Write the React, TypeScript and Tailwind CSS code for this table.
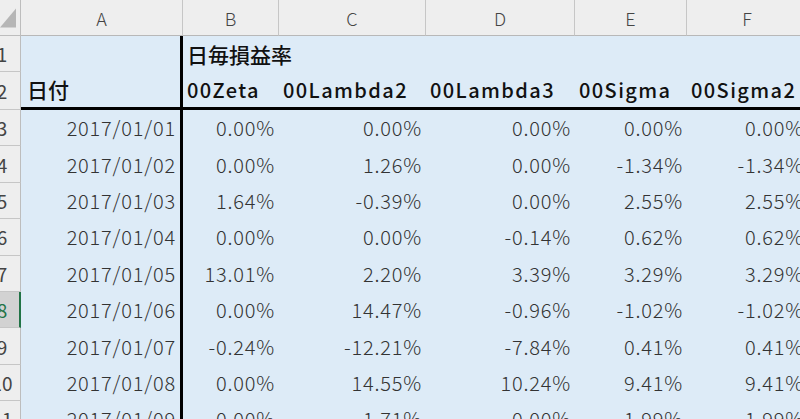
import React from "react";

const cols = ["A", "B", "C", "D", "E", "F"];

const labels = ["00Zeta", "00Lambda2", "00Lambda3", "00Sigma", "00Sigma2"];

const rows: string[][] = [
  ["2017/01/01", "0.00%", "0.00%", "0.00%", "0.00%", "0.00%"],
  ["2017/01/02", "0.00%", "1.26%", "0.00%", "-1.34%", "-1.34%"],
  ["2017/01/03", "1.64%", "-0.39%", "0.00%", "2.55%", "2.55%"],
  ["2017/01/04", "0.00%", "0.00%", "-0.14%", "0.62%", "0.62%"],
  ["2017/01/05", "13.01%", "2.20%", "3.39%", "3.29%", "3.29%"],
  ["2017/01/06", "0.00%", "14.47%", "-0.96%", "-1.02%", "-1.02%"],
  ["2017/01/07", "-0.24%", "-12.21%", "-7.84%", "0.41%", "0.41%"],
  ["2017/01/08", "0.00%", "14.55%", "10.24%", "9.41%", "9.41%"],
  ["2017/01/09", "0.00%", "1.71%", "0.00%", "1.99%", "1.99%"],
];

// selected row (row header highlighted)
const activeRow = 8;

function RowHead({ n }: { n: number }) {
  const active = n === activeRow;
  return (
    <div
      className={
        "relative overflow-hidden border-b border-[#c6c6c6] flex items-center " +
        (active
          ? "bg-[#d2d2d2] text-[#217346] border-r-2 border-r-[#217346]"
          : "bg-[#eeeeee] text-[#444] border-r border-r-[#bdbdbd]")
      }
    >
      <div className="w-[40px] ml-[-18px] shrink-0 text-center text-[19px] leading-none">{n}</div>
    </div>
  );
}

export default function App() {
  return (
    <div
      className="w-[800px] h-[419px] overflow-hidden bg-[#ddebf7]"
      style={{ fontFamily: '"Noto Sans CJK JP", "Noto Sans", sans-serif' }}
    >
      <div className="grid grid-cols-[21px_162px_96px_147px_149px_112px_121px] grid-rows-[36px_36px_38px_repeat(9,36.4px)] w-[808px]">
        {/* corner */}
        <div className="bg-[#eeeeee] border-r border-b border-[#bdbdbd] flex items-end justify-end pr-[4px] pb-[7px]">
          <svg width="17" height="20" viewBox="0 0 17 20">
            <polygon points="17,0 17,20 0,20" fill="#b6b6b6" />
          </svg>
        </div>
        {cols.map((c) => (
          <div
            key={c}
            className="bg-[#eeeeee] border-r border-b border-[#c6c6c6] border-b-[#b8b8b8] flex items-center justify-center text-[18px] text-[#444] leading-none font-light"
          >
            {c}
          </div>
        ))}

        {/* row 1 */}
        <RowHead n={1} />
        <div className="border-r-[3px] border-black" />
        <div className="flex items-center pl-[4px] pt-[2px] text-[21px] font-medium text-[#111] whitespace-nowrap">
          日毎損益率
        </div>
        <div />
        <div />
        <div />
        <div />

        {/* row 2 */}
        <RowHead n={2} />
        <div className="border-r-[3px] border-b-[3px] border-black flex items-center pl-[6px] pt-[1px] text-[21px] font-medium text-[#111]">
          日付
        </div>
        {labels.map((l) => (
          <div
            key={l}
            className="border-b-[3px] border-black flex items-center pl-[4px] pt-[1px] text-[20px] font-medium tracking-[1.4px] text-[#111] whitespace-nowrap"
          >
            {l}
          </div>
        ))}

        {/* data rows */}
        {rows.map((r, i) => (
          <React.Fragment key={i}>
            <RowHead n={i + 3} />
            {r.map((v, j) => (
              <div
                key={j}
                className={
                  "flex items-center justify-end pr-[4px] text-[20px] font-light tracking-[0.8px] text-[#333] whitespace-nowrap " +
                  (j === 0 ? "border-r-[3px] border-black pr-[2px]" : "")
                }
              >
                {v}
              </div>
            ))}
          </React.Fragment>
        ))}
      </div>
    </div>
  );
}
